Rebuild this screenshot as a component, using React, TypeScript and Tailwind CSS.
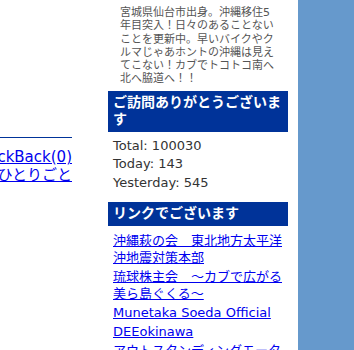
const font = { fontFamily: '"DejaVu Sans", "Noto Sans CJK JP", sans-serif' };

const links = [
  "沖縄萩の会　東北地方太平洋沖地震対策本部",
  "琉球株主会　～カブで広がる美ら島ぐくる～",
  "Munetaka Soeda Official",
  "DEEokinawa",
  "アウトスタンディングモーターサイクル",
];

const SideHeader = ({ children }: { children: React.ReactNode }) => (
  <h2 className="bg-[#003399] px-[5px] py-[3.5px] text-[14px] font-bold leading-[17px] text-white">
    {children}
  </h2>
);

export default function App() {
  return (
    <div className="flex h-[350px] w-[354px] overflow-hidden bg-white" style={font}>
      {/* main column, mostly scrolled off to the left */}
      <div className="w-[108px] shrink-0">
        <div className="mt-[137px] flex w-[72px] flex-col items-end border-t border-[#003399] pt-[10px] text-[15px] leading-[18px] text-[#0000ee]">
          <a href="#" className="whitespace-nowrap underline">TrackBack(0)</a>
          <a href="#" className="whitespace-nowrap underline">カテゴリ：ひとりごと</a>
        </div>
      </div>

      {/* sidebar */}
      <div className="w-[180px] shrink-0">
        <p className="mb-[5px] px-[12px] pt-[6px] text-[11px] leading-[13.3px] text-[#555]">
          宮城県仙台市出身。沖縄移住5年目突入！日々のあることないことを更新中。早いバイクやクルマじゃあホントの沖縄は見えてこない！カブでトコトコ南へ北へ脇道へ！！
        </p>

        <SideHeader>ご訪問ありがとうございます</SideHeader>
        <div className="px-[5px] pb-[9px] pt-[5px] text-[13px] leading-[18.7px] text-[#333]">
          <div>Total: 100030</div>
          <div>Today: 143</div>
          <div>Yesterday: 545</div>
        </div>

        <SideHeader>リンクでございます</SideHeader>
        <ul className="px-[5px] pt-[6px] text-[13px] leading-[17px]">
          {links.map((l) => (
            <li key={l} className="mb-[2px]">
              <a href="#" className="text-[#0000ee] underline">{l}</a>
            </li>
          ))}
        </ul>
      </div>

      {/* right band */}
      <div className="ml-[10px] flex-1 bg-[#6699cc]" />
    </div>
  );
}
